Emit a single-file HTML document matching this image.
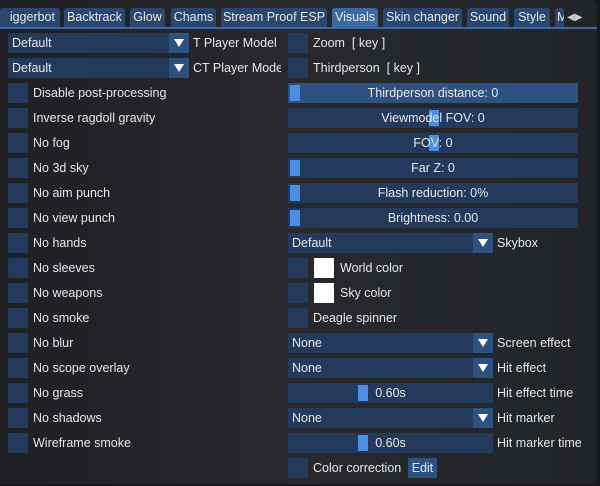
<!DOCTYPE html><html><head><style>
body{margin:0;width:600px;height:486px;background:#15171b;overflow:hidden;font-family:"Liberation Sans",sans-serif;font-size:12.5px;color:#e8e8e8;position:relative}
.win{position:absolute;left:0;top:0;width:597px;height:484px;background:linear-gradient(90deg,#1e2024,#27292d 50%,#212428);border-radius:0 6px 6px 0}
.a{position:absolute;box-sizing:border-box;white-space:nowrap;line-height:20px}
.tab{top:8px;height:19px;line-height:19px;background:#2a4770;border-radius:3px 3px 0 0;text-align:center;overflow:hidden}
.tab.on{background:#3b6aa3}
.f{background:#243a5c;height:20px}
.cb{width:20px;height:20px;background:#243a5c}
.ar{background:#2d5282;width:20px;height:20px}
.ar:after{content:"";position:absolute;left:5px;top:6px;border-left:5px solid transparent;border-right:5px solid transparent;border-top:8px solid #fff}
.g{background:#4a8ee6;width:10px;height:16px;top:2px}
.c{text-align:center}
</style></head><body><div class="win"></div>
<div class="a" style="left:0;top:27px;width:597px;height:2px;background:#3b6aa3"></div>
<div class="a tab" style="left:0;width:60px;text-align:right;padding-right:5px">iggerbot</div>
<div class="a tab" style="left:64px;width:61px">Backtrack</div>
<div class="a tab" style="left:130px;width:35px">Glow</div>
<div class="a tab" style="left:171px;width:45px">Chams</div>
<div class="a tab" style="left:221px;width:106px">Stream Proof ESP</div>
<div class="a tab on" style="left:332px;width:46px">Visuals</div>
<div class="a tab" style="left:383px;width:79px">Skin changer</div>
<div class="a tab" style="left:467px;width:42px">Sound</div>
<div class="a tab" style="left:514px;width:36px">Style</div>
<div class="a tab" style="left:555px;width:9px;text-align:left;padding-left:2px">M</div>
<div class="a" style="left:567px;top:8px;line-height:19px;font-size:10px;color:#ccc">◀▶</div>

<div class="a f" style="left:8px;top:33px;width:181px;padding-left:4px">Default</div><div class="a ar" style="left:169px;top:33px"></div><div class="a" style="left:193px;top:33px">T Player Model</div>
<div class="a f" style="left:8px;top:58px;width:181px;padding-left:4px">Default</div><div class="a ar" style="left:169px;top:58px"></div><div class="a" style="left:193px;top:58px;width:88px;overflow:hidden">CT Player Mode</div>

<div class="a cb" style="left:8px;top:83px"></div><div class="a" style="left:33px;top:83px">Disable post-processing</div>
<div class="a cb" style="left:8px;top:108px"></div><div class="a" style="left:33px;top:108px">Inverse ragdoll gravity</div>
<div class="a cb" style="left:8px;top:133px"></div><div class="a" style="left:33px;top:133px">No fog</div>
<div class="a cb" style="left:8px;top:158px"></div><div class="a" style="left:33px;top:158px">No 3d sky</div>
<div class="a cb" style="left:8px;top:183px"></div><div class="a" style="left:33px;top:183px">No aim punch</div>
<div class="a cb" style="left:8px;top:208px"></div><div class="a" style="left:33px;top:208px">No view punch</div>
<div class="a cb" style="left:8px;top:233px"></div><div class="a" style="left:33px;top:233px">No hands</div>
<div class="a cb" style="left:8px;top:258px"></div><div class="a" style="left:33px;top:258px">No sleeves</div>
<div class="a cb" style="left:8px;top:283px"></div><div class="a" style="left:33px;top:283px">No weapons</div>
<div class="a cb" style="left:8px;top:308px"></div><div class="a" style="left:33px;top:308px">No smoke</div>
<div class="a cb" style="left:8px;top:333px"></div><div class="a" style="left:33px;top:333px">No blur</div>
<div class="a cb" style="left:8px;top:358px"></div><div class="a" style="left:33px;top:358px">No scope overlay</div>
<div class="a cb" style="left:8px;top:383px"></div><div class="a" style="left:33px;top:383px">No grass</div>
<div class="a cb" style="left:8px;top:408px"></div><div class="a" style="left:33px;top:408px">No shadows</div>
<div class="a cb" style="left:8px;top:433px"></div><div class="a" style="left:33px;top:433px">Wireframe smoke</div>

<div class="a cb" style="left:288px;top:33px"></div><div class="a" style="left:313px;top:33px">Zoom &nbsp;[ key ]</div>
<div class="a cb" style="left:288px;top:58px"></div><div class="a" style="left:313px;top:58px">Thirdperson &nbsp;[ key ]</div>
<div class="a f" style="left:288px;top:83px;width:290px;background:#2d5282"></div><div class="a g" style="left:290px;top:85px"></div><div class="a c" style="left:288px;top:83px;width:290px">Thirdperson distance: 0</div>
<div class="a f" style="left:288px;top:108px;width:290px"></div><div class="a g" style="left:429px;top:110px"></div><div class="a c" style="left:288px;top:108px;width:290px">Viewmodel FOV: 0</div>
<div class="a f" style="left:288px;top:133px;width:290px"></div><div class="a g" style="left:429px;top:135px"></div><div class="a c" style="left:288px;top:133px;width:290px">FOV: 0</div>
<div class="a f" style="left:288px;top:158px;width:290px"></div><div class="a g" style="left:290px;top:160px"></div><div class="a c" style="left:288px;top:158px;width:290px">Far Z: 0</div>
<div class="a f" style="left:288px;top:183px;width:290px"></div><div class="a g" style="left:290px;top:185px"></div><div class="a c" style="left:288px;top:183px;width:290px">Flash reduction: 0%</div>
<div class="a f" style="left:288px;top:208px;width:290px"></div><div class="a g" style="left:290px;top:210px"></div><div class="a c" style="left:288px;top:208px;width:290px">Brightness: 0.00</div>

<div class="a f" style="left:288px;top:233px;width:205px;padding-left:4px">Default</div><div class="a ar" style="left:473px;top:233px"></div><div class="a" style="left:497px;top:233px">Skybox</div>
<div class="a cb" style="left:288px;top:258px"></div><div class="a" style="left:314px;top:258px;width:20px;height:20px;background:#fff"></div><div class="a" style="left:340px;top:258px">World color</div>
<div class="a cb" style="left:288px;top:283px"></div><div class="a" style="left:314px;top:283px;width:20px;height:20px;background:#fff"></div><div class="a" style="left:340px;top:283px">Sky color</div>
<div class="a cb" style="left:288px;top:308px"></div><div class="a" style="left:313px;top:308px">Deagle spinner</div>
<div class="a f" style="left:288px;top:333px;width:205px;padding-left:4px">None</div><div class="a ar" style="left:473px;top:333px"></div><div class="a" style="left:497px;top:333px">Screen effect</div>
<div class="a f" style="left:288px;top:358px;width:205px;padding-left:4px">None</div><div class="a ar" style="left:473px;top:358px"></div><div class="a" style="left:497px;top:358px">Hit effect</div>
<div class="a f" style="left:288px;top:383px;width:205px"></div><div class="a g" style="left:358px;top:385px"></div><div class="a c" style="left:288px;top:383px;width:205px">0.60s</div><div class="a" style="left:497px;top:383px">Hit effect time</div>
<div class="a f" style="left:288px;top:408px;width:205px;padding-left:4px">None</div><div class="a ar" style="left:473px;top:408px"></div><div class="a" style="left:497px;top:408px">Hit marker</div>
<div class="a f" style="left:288px;top:433px;width:205px"></div><div class="a g" style="left:358px;top:435px"></div><div class="a c" style="left:288px;top:433px;width:205px">0.60s</div><div class="a" style="left:497px;top:433px">Hit marker time</div>
<div class="a cb" style="left:288px;top:458px"></div><div class="a" style="left:313px;top:458px">Color correction</div><div class="a" style="left:408px;top:458px;width:29px;height:20px;background:#2d5282;text-align:center">Edit</div>
</body></html>
